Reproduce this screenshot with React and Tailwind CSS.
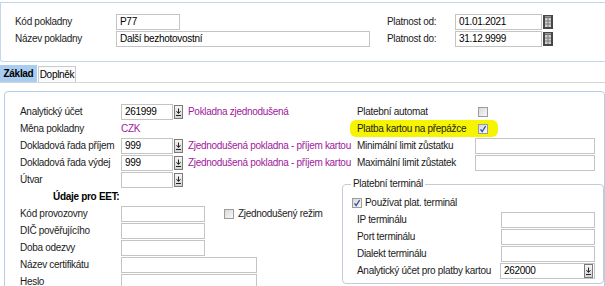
const Input = ({ w, value, children }) => (
  <div className={`h-[16px] shrink-0 border border-[#c4c4c4] bg-white flex items-center pl-[3px] text-black whitespace-nowrap ${w}`}>
    <span className="flex-1">{value}</span>
    {children}
  </div>
);

const DropBtn = ({ inside }) => (
  <div
    className={`w-[9px] h-[14px] shrink-0 border border-[#7a7a7a] bg-gradient-to-b from-[#f6f6f6] to-[#d4d4d4] flex items-center justify-center ${
      inside ? 'mr-[1px]' : 'ml-[1px]'
    }`}
  >
    <svg width="7" height="10" viewBox="0 0 7 10">
      <path d="M3.5 1.5v4.5M1.5 4.2l2 2.3 2-2.3" stroke="#222" fill="none" />
      <path d="M1 8.5h5" stroke="#222" />
    </svg>
  </div>
);

const CalBtn = () => (
  <svg width="10" height="14" viewBox="0 0 10 14" className="ml-[1px] shrink-0">
    <rect x="0" y="0" width="10" height="14" fill="#474747" />
    <rect x="2" y="3" width="6" height="9" fill="#cfcfcf" />
    <rect x="2" y="1" width="6" height="1.5" fill="#9a9a9a" />
    <path d="M2 6h6M2 9h6M5 3v9" stroke="#6a6a6a" strokeWidth="0.8" />
  </svg>
);

const Check = ({ checked }) => (
  <div className="w-[10px] h-[10px] border border-[#9c9c9c] bg-gradient-to-br from-[#d8d8d8] to-[#f9f9f9] flex items-center justify-center shrink-0">
    {checked && (
      <svg width="8" height="8" viewBox="0 0 8 8">
        <path d="M1.5 4.3l1.7 2.2L6.6 1.2" stroke="#2d55a8" strokeWidth="1.3" fill="none" />
      </svg>
    )}
  </div>
);

const Row = ({ children, className = '' }) => (
  <div className={`h-[17px] flex items-center whitespace-nowrap ${className}`}>{children}</div>
);

const Label = ({ w, children }) => <span className={`shrink-0 ${w}`}>{children}</span>;

const Purple = ({ children }) => <span className="text-[#a0189c]">{children}</span>;

export default function App() {
  return (
    <div className="w-[605px] h-[286px] overflow-hidden bg-white text-[10px] tracking-[-0.3px] text-[#1c1c1c] font-['Liberation_Sans',Arial,sans-serif]">
      {/* hlavička pokladny */}
      <div className="mt-[2px] h-[60px] border-t border-b border-l border-[#c6d6ea] rounded-bl-[3px] flex pt-[10px]">
        <div className="pl-[14px] w-[386px] flex flex-col">
          <Row>
            <Label w="w-[101px]">Kód pokladny</Label>
            <Input w="w-[64px]" value="P77" />
          </Row>
          <Row>
            <Label w="w-[101px]">Název pokladny</Label>
            <Input w="w-[254px]" value="Další bezhotovostní" />
          </Row>
        </div>
        <div className="flex flex-col">
          <Row>
            <Label w="w-[68px]">Platnost od:</Label>
            <Input w="w-[87px]" value="01.01.2021" />
            <CalBtn />
          </Row>
          <Row>
            <Label w="w-[68px]">Platnost do:</Label>
            <Input w="w-[87px]" value="31.12.9999" />
            <CalBtn />
          </Row>
        </div>
      </div>

      {/* záložky */}
      <div className="h-[21px] border-b border-[#d6d6d6] flex items-end">
        <div className="h-[17px] w-[37px] bg-[#a9cdf1] font-bold text-black flex items-center justify-center">Základ</div>
        <div className="h-[16px] w-[38px] ml-[1px] border border-b-0 border-[#cbcbcb] bg-[#fbfbfb] text-black flex items-center justify-center">
          Doplněk
        </div>
      </div>

      {/* hlavní panel */}
      <div className="mt-[8px] ml-[4px] h-[220px] border border-[#b8cce4] rounded-[4px] pt-[11px] flex">
        <div className="pl-[15px] w-[337px] shrink-0 flex flex-col">
          <Row>
            <Label w="w-[101px]">Analytický účet</Label>
            <Input w="w-[52px]" value="261999" />
            <DropBtn />
            <span className="ml-[5px]"><Purple>Pokladna zjednodušená</Purple></span>
          </Row>
          <Row>
            <Label w="w-[101px]">Měna pokladny</Label>
            <Purple>CZK</Purple>
          </Row>
          <Row>
            <Label w="w-[101px]">Dokladová řada příjem</Label>
            <Input w="w-[52px]" value="999" />
            <DropBtn />
            <span className="ml-[5px]"><Purple>Zjednodušená pokladna - příjem kartou</Purple></span>
          </Row>
          <Row>
            <Label w="w-[101px]">Dokladová řada výdej</Label>
            <Input w="w-[52px]" value="999" />
            <DropBtn />
            <span className="ml-[5px]"><Purple>Zjednodušená pokladna - příjem kartou</Purple></span>
          </Row>
          <Row>
            <Label w="w-[101px]">Útvar</Label>
            <Input w="w-[52px]" value="" />
            <DropBtn />
          </Row>
          <Row className="pl-[33px] font-bold text-black">Údaje pro EET:</Row>
          <Row>
            <Label w="w-[101px]">Kód provozovny</Label>
            <Input w="w-[84px]" value="" />
            <span className="ml-[19px]"><Check /></span>
            <span className="ml-[4px]">Zjednodušený režim</span>
          </Row>
          <Row>
            <Label w="w-[101px]">DIČ pověřujícího</Label>
            <Input w="w-[84px]" value="" />
          </Row>
          <Row>
            <Label w="w-[101px]">Doba odezvy</Label>
            <Input w="w-[84px]" value="" />
          </Row>
          <Row>
            <Label w="w-[101px]">Název certifikátu</Label>
            <Input w="w-[136px]" value="" />
          </Row>
          <Row>
            <Label w="w-[101px]">Heslo</Label>
            <Input w="w-[136px]" value="" />
          </Row>
        </div>

        <div className="flex-1 flex flex-col">
          <Row className="pl-[15px]">
            <Label w="w-[121px]">Platební automat</Label>
            <Check />
          </Row>
          <Row className="ml-[8px] pl-[7px] w-[148px] bg-[#f6f400] rounded-[6px]">
            <Label w="w-[121px]">Platba kartou na přepážce</Label>
            <Check checked />
          </Row>
          <Row className="pl-[15px]">
            <Label w="w-[118px]">Minimální limit zůstatku</Label>
            <Input w="w-[120px]" value="" />
          </Row>
          <Row className="pl-[15px]">
            <Label w="w-[118px]">Maximální limit zůstatek</Label>
            <Input w="w-[120px]" value="" />
          </Row>

          <fieldset className="mt-[7px] w-[256px] border border-[#c3ccd6] rounded-[4px] px-[8px] pb-[4px]">
            <legend className="px-[2px] leading-[12px]">Platební terminál</legend>
            <Row className="mt-[4px] pl-[1px]">
              <Check checked />
              <span className="ml-[3px]">Používat plat. terminál</span>
            </Row>
            <Row className="pl-[6px]">
              <Label w="w-[144px]">IP terminálu</Label>
              <Input w="w-[94px]" value="" />
            </Row>
            <Row className="pl-[6px]">
              <Label w="w-[144px]">Port terminálu</Label>
              <Input w="w-[94px]" value="" />
            </Row>
            <Row className="pl-[6px]">
              <Label w="w-[144px]">Dialekt terminálu</Label>
              <Input w="w-[94px]" value="" />
            </Row>
            <Row className="pl-[6px]">
              <Label w="w-[143px]">Analytický účet pro platby kartou</Label>
              <Input w="w-[95px]" value="262000">
                <DropBtn inside />
              </Input>
            </Row>
          </fieldset>
        </div>
      </div>
    </div>
  );
}
